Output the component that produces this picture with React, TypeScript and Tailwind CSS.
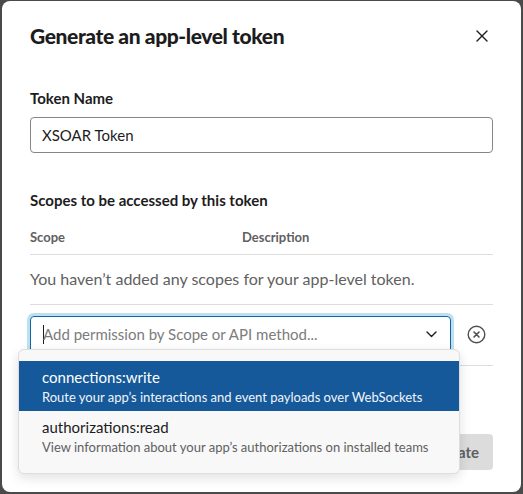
import React from "react";

const scopes = [
  {
    name: "connections:write",
    description: "Route your app’s interactions and event payloads over WebSockets",
  },
  {
    name: "authorizations:read",
    description: "View information about your app’s authorizations on installed teams",
  },
];

function CloseIcon() {
  return (
    <svg width="12" height="12" viewBox="0 0 12 12" fill="none">
      <path d="M1 1L11 11M11 1L1 11" stroke="#1d1c1d" strokeWidth="1.4" strokeLinecap="round" />
    </svg>
  );
}

function ChevronIcon() {
  return (
    <svg width="11" height="7" viewBox="0 0 11 7" fill="none">
      <path d="M1 1L5.5 5.5L10 1" stroke="#1d1c1d" strokeWidth="1.4" strokeLinecap="round" strokeLinejoin="round" />
    </svg>
  );
}

function ClearIcon() {
  return (
    <svg width="19" height="19" viewBox="0 0 19 19" fill="none">
      <circle cx="9.5" cy="9.5" r="8.3" stroke="#4f4e4f" strokeWidth="1.4" />
      <path d="M7 7L12 12M12 7L7 12" stroke="#4f4e4f" strokeWidth="1.6" strokeLinecap="round" />
    </svg>
  );
}

export default function App() {
  return (
    <div className="w-[523px] h-[494px] bg-[#4a4a4a] pl-[2px] pt-[1px] overflow-hidden font-['Lato','Noto_Sans',sans-serif] text-[#1d1c1d]">
      <div className="w-[519px] h-[491px] bg-white rounded-[8px] px-[28px] pt-[21px] flex flex-col">
        {/* header */}
        <div className="flex items-center justify-between">
          <h1 className="text-[21px] leading-[28px] font-black tracking-[-0.4px]">
            Generate an app-level token
          </h1>
          <button className="w-[24px] h-[24px] flex items-center justify-center mr-[-1px]">
            <CloseIcon />
          </button>
        </div>

        {/* token name */}
        <label className="mt-[37px] text-[15px] leading-[22px] font-bold">Token Name</label>
        <div className="mt-[8px] h-[36px] border border-[#868686] rounded-[4px] px-[11px] flex items-center text-[15px]">
          XSOAR Token
        </div>

        {/* scopes */}
        <div className="mt-[36px] text-[15px] leading-[22px] font-bold">
          Scopes to be accessed by this token
        </div>
        <div className="mt-[17px] flex text-[13px] leading-[18px] font-bold text-[#616061] pb-[8px] border-b border-[#dddddd]">
          <span className="w-[212px]">Scope</span>
          <span>Description</span>
        </div>
        <div className="pt-[12px] pb-[13px] text-[16px] leading-[24px] text-[#616061] border-b border-[#dddddd]">
          You haven’t added any scopes for your app-level token.
        </div>

        {/* add scope row */}
        <div className="pt-[11px] pb-[12px] border-b border-[#dddddd] flex items-center">
          <div className="relative w-[421px]">
            <div className="h-[37px] border border-[#1264a3] rounded-[4px] shadow-[0_0_0_3px_rgba(29,155,209,0.3)] pl-[12px] pr-[13px] flex items-center">
              <span className="w-px h-[19px] bg-[#1d1c1d]" />
              <span className="flex-1 text-[15px] text-[#7c7c7c] ml-[-1px]">
                Add permission by Scope or API method...
              </span>
              <ChevronIcon />
            </div>

            {/* dropdown */}
            <div className="absolute left-[-12px] top-[33px] w-[442px] bg-[#f8f8f8] border border-[#dddddd] rounded-[6px] shadow-[0_4px_12px_rgba(0,0,0,0.12)] pt-[11px] pb-[12px] z-10">
              {scopes.map((s, i) => (
                <div
                  key={s.name}
                  className={`pl-[23px] pr-[12px] pt-[5px] pb-[5px] ${
                    i === 0 ? "bg-[#15599a] text-white" : "text-[#1d1c1d]"
                  }`}
                >
                  <div className="text-[15px] leading-[22px]">{s.name}</div>
                  <div
                    className={`text-[13px] leading-[18px] ${
                      i === 0 ? "text-[#f2f5f9]" : "text-[#616061]"
                    }`}
                  >
                    {s.description}
                  </div>
                </div>
              ))}
            </div>
          </div>
          <button className="ml-[14px] w-[22px] h-[22px] flex items-center justify-center">
            <ClearIcon />
          </button>
        </div>

        {/* footer */}
        <div className="mt-auto mb-[22px] flex justify-end">
          <button className="h-[36px] px-[14px] rounded-[4px] bg-[#dcdcdc] text-[#5e5e5e] text-[15px] font-bold">
            Generate
          </button>
        </div>
      </div>
    </div>
  );
}
